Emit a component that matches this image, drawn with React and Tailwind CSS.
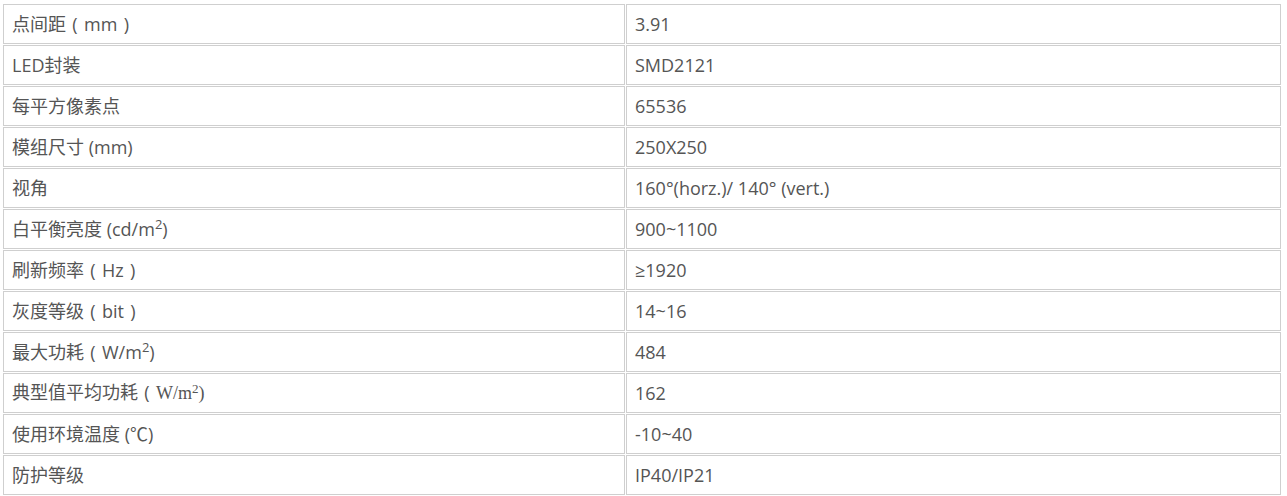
import React from "react";

const Sup = () => <sup className="text-[13px]">2</sup>;
const P = ({ c }) => (
  <span className="inline-block w-[18px] text-center">{c}</span>
);

const rows = [
  [<>点间距<P c="(" />mm<P c=")" /></>, "3.91"],
  [<>LED封装</>, "SMD2121"],
  [<>每平方像素点</>, "65536"],
  [<>模组尺寸 (mm)</>, "250X250"],
  [<>视角</>, "160°(horz.)/ 140° (vert.)"],
  [<>白平衡亮度 (cd/m<Sup />)</>, "900~1100"],
  [<>刷新频率<P c="(" />Hz<P c=")" /></>, "≥1920"],
  [<>灰度等级<P c="(" />bit<P c=")" /></>, "14~16"],
  [<>最大功耗<P c="(" />W/m<Sup />)</>, "484"],
  [
    <>
      典型值平均功耗<P c="(" />
      <span style={{ fontFamily: '"Liberation Serif", serif' }}>
        W/m<Sup />)
      </span>
    </>,
    "162",
  ],
  [<>使用环境温度 (℃)</>, "-10~40"],
  [<>防护等级</>, "IP40/IP21"],
];

export default function App() {
  return (
    <div
      className="bg-white w-[1287px] h-[496px] pl-[3px] pt-[4px]"
      style={{ fontFamily: '"Open Sans", "Noto Sans CJK SC", sans-serif' }}
    >
      <div className="grid grid-cols-[622px_655px] gap-px auto-rows-[40px]">
        {rows.map(([label, value], i) => (
          <React.Fragment key={i}>
            <div className="border border-[#cfcfcf] flex items-center pl-2 text-[18px] text-[#555] whitespace-nowrap">
              <span>{label}</span>
            </div>
            <div className="border border-[#cfcfcf] flex items-center pl-2 text-[18px] text-[#555] whitespace-nowrap">
              <span>{value}</span>
            </div>
          </React.Fragment>
        ))}
      </div>
    </div>
  );
}
